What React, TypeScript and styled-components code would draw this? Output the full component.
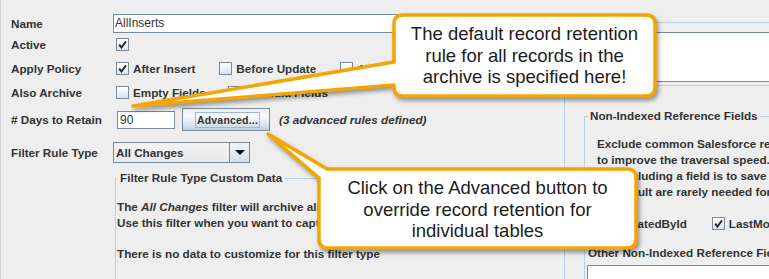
import React from "react";
import styled, { createGlobalStyle } from "styled-components";

const C = {
  bg: "#eeeeee",
  text: "#333333",
  field: "#7a8a99",
  titled: "#b8cfe5",
  orange: "#f5a500",
};

const GlobalStyle = createGlobalStyle`
  html, body { margin: 0; padding: 0; background: ${C.bg}; }
  #root { width: 769px; height: 279px; }
`;

const Page = styled.div`
  position: relative;
  display: flex;
  width: 769px;
  height: 279px;
  box-sizing: border-box;
  overflow: hidden;
  background: ${C.bg};
  border-left: 1px solid #d4d4d4;
  color: ${C.text};
  font-family: "Liberation Sans", Arial, sans-serif;
  font-size: 11.7px;
  font-weight: bold;
`;

const LeftColumn = styled.div`
  flex: none;
  width: 563px;
  box-sizing: border-box;
  padding: 14px 0 0 10px;
  display: flex;
  flex-direction: column;
`;

const Row = styled.div<{ $h: number }>`
  display: flex;
  align-items: center;
  flex: none;
  height: ${(p) => p.$h}px;
  white-space: nowrap;
`;

const Label = styled.div`
  flex: none;
  width: 102px;
`;

const TextField = styled.div<{ $w: number; $h: number; $ml?: number; $pl?: number }>`
  flex: none;
  box-sizing: border-box;
  width: ${(p) => p.$w}px;
  height: ${(p) => p.$h}px;
  margin-left: ${(p) => p.$ml ?? 0}px;
  padding-left: ${(p) => p.$pl ?? 1}px;
  background: #ffffff;
  border: 1px solid ${C.field};
  font-size: 12px;
  font-weight: normal;
  line-height: ${(p) => p.$h - 2}px;
  overflow: hidden;
`;

const CheckGroup = styled.div<{ $gap: number; $ml: number }>`
  display: flex;
  align-items: center;
  gap: ${(p) => p.$gap}px;
  margin-left: ${(p) => p.$ml}px;
`;

const CheckItem = styled.div`
  display: flex;
  align-items: center;
  gap: 4px;
`;

const Box = styled.span`
  flex: none;
  box-sizing: border-box;
  width: 13px;
  height: 13px;
  border: 1px solid ${C.field};
  background: linear-gradient(#ffffff, #d9e4ef);
  display: flex;
  align-items: center;
  justify-content: center;
`;

const Check = ({ checked, label }: { checked?: boolean; label?: string }) => (
  <CheckItem>
    <Box>
      {checked && (
        <svg width="9" height="9" viewBox="0 0 9 9">
          <path d="M1.2 4.6 L3.4 7.6 L8 1.4" fill="none" stroke="#2a2a2a" strokeWidth="1.9" />
        </svg>
      )}
    </Box>
    {label && <span>{label}</span>}
  </CheckItem>
);

const Button = styled.div`
  flex: none;
  box-sizing: border-box;
  width: 88px;
  height: 23px;
  margin-left: 7px;
  padding-left: 3px;
  border: 1px solid ${C.field};
  background: linear-gradient(#e9f0f6 0%, #f8fafc 35%, #d7e3ee 75%, #bfd1e3 100%);
  display: flex;
  align-items: center;
  justify-content: center;
`;

const FocusRing = styled.span`
  border: 1px solid #a3b8cc;
  padding: 0 1px;
  font-size: 10.5px;
  line-height: 14px;
  letter-spacing: 0.2px;
`;

const Hint = styled.span`
  margin-left: 9px;
  font-style: italic;
`;

const Combo = styled.div`
  flex: none;
  box-sizing: border-box;
  width: 137px;
  height: 21px;
  display: flex;
  border: 1px solid ${C.field};
  background: linear-gradient(#f3f3f3, #e9e9e9);
`;

const ComboValue = styled.div`
  flex: 1;
  padding-left: 2px;
  line-height: 19px;
`;

const ComboArrow = styled.div`
  flex: none;
  width: 19px;
  border-left: 1px solid ${C.field};
  background: linear-gradient(#f4f7fa, #d3dfea);
  display: flex;
  align-items: center;
  justify-content: center;
`;

const TitledSet = styled.fieldset<{ $w: number; $h: number; $pt: number; $pl: number }>`
  flex: none;
  box-sizing: border-box;
  min-width: 0;
  width: ${(p) => p.$w}px;
  height: ${(p) => p.$h}px;
  margin: 0;
  padding: ${(p) => p.$pt}px 0 0 ${(p) => p.$pl}px;
  border: 1px solid ${C.titled};
  border-right: none;
`;

const Legend = styled.legend<{ $px: number }>`
  padding: 0 ${(p) => p.$px}px;
  line-height: 14px;
  white-space: nowrap;
`;

const CustomData = styled(TitledSet)`
  margin: 1px 0 0 104px;
`;

const Para = styled.p<{ $mt?: number; $ml?: number }>`
  margin: ${(p) => p.$mt ?? 0}px 0 0 ${(p) => p.$ml ?? 0}px;
  line-height: 16px;
  white-space: nowrap;
`;

const RightColumn = styled.div`
  flex: 1;
  min-width: 0;
  padding-top: 22px;
  display: flex;
  flex-direction: column;
`;

const DescBox = styled.div`
  flex: none;
  box-sizing: border-box;
  height: 64px;
  padding: 9px 0 0 9px;
  border: 1px solid ${C.titled};
  border-right: none;
`;

const TextArea = styled.div<{ $h: number }>`
  box-sizing: border-box;
  width: 320px;
  height: ${(p) => p.$h}px;
  background: #ffffff;
  border: 1px solid ${C.field};
`;

const OuterPanel = styled.div`
  flex: 1;
  margin-top: 10px;
  padding: 13px 0 0 19px;
  border-left: 1px solid ${C.titled};
`;

const NonIndexed = styled(TitledSet)``;

const OtherSet = styled.fieldset`
  min-width: 0;
  margin: 11px 0 0 -1px;
  padding: 5px 0 0 0;
  border: none;
  border-top: 1px solid ${C.titled};
`;

const CheckRow = styled.div`
  height: 24px;
  margin: 11px 0 0 13px;
  display: flex;
  align-items: center;
  white-space: nowrap;
`;

const Overlay = styled.svg`
  position: absolute;
  left: -1px;
  top: 0;
  width: 769px;
  height: 279px;
  overflow: visible;
  pointer-events: none;
  filter: drop-shadow(2px 3px 2px rgba(0, 0, 0, 0.38));
`;

const CalloutText = styled.div<{ $x: number; $y: number; $w: number }>`
  position: absolute;
  left: ${(p) => p.$x - 1}px;
  top: ${(p) => p.$y}px;
  width: ${(p) => p.$w}px;
  text-align: center;
  font-family: "Liberation Sans", Arial, sans-serif;
  font-weight: normal;
  font-size: 18.5px;
  line-height: 21.5px;
  color: #1c1c1c;
  white-space: nowrap;
`;

const callout1 =
  "M403 15 H646 Q655 15 655 24 V87 Q655 96 646 96 H403 Q394 96 394 87 V85 L133 106 L394 62 V24 Q394 15 403 15 Z";
const callout2 =
  "M327 169 H627 Q636 169 636 178 V239 Q636 248 627 248 H328 Q319 248 319 239 V178 L268 134 Z";

export default function App() {
  return (
    <Page>
      <GlobalStyle />
      <LeftColumn>
        <Row $h={19}>
          <Label>Name</Label>
          <TextField $w={443} $h={19} $pl={1}>AllInserts</TextField>
        </Row>
        <Row $h={23}>
          <Label>Active</Label>
          <CheckGroup $gap={23} $ml={3}>
            <Check checked />
          </CheckGroup>
        </Row>
        <Row $h={24}>
          <Label>Apply Policy</Label>
          <CheckGroup $gap={24} $ml={3}>
            <Check checked label="After Insert" />
            <Check label="Before Update" />
            <Check label="After Update" />
          </CheckGroup>
        </Row>
        <Row $h={24}>
          <Label>Also Archive</Label>
          <CheckGroup $gap={22} $ml={3}>
            <Check label="Empty Fields" />
            <Check label="Formula Fields" />
          </CheckGroup>
        </Row>
        <Row $h={31}>
          <Label># Days to Retain</Label>
          <TextField $w={58} $h={18} $ml={4} $pl={2}>90</TextField>
          <Button>
            <FocusRing>Advanced...</FocusRing>
          </Button>
          <Hint>(3 advanced rules defined)</Hint>
        </Row>
        <Row $h={35}>
          <Label>Filter Rule Type</Label>
          <Combo>
            <ComboValue>All Changes</ComboValue>
            <ComboArrow>
              <svg width="10" height="5" viewBox="0 0 10 5">
                <polygon points="0,0 10,0 5,5" fill="#111" />
              </svg>
            </ComboArrow>
          </Combo>
        </Row>
        <CustomData $w={442} $h={160} $pt={14} $pl={1}>
          <Legend $px={3}>Filter Rule Type Custom Data</Legend>
          <Para>
            The <i>All Changes</i> filter will archive all changes made to the records.
          </Para>
          <Para>Use this filter when you want to capture every change.</Para>
          <Para $mt={15}>There is no data to customize for this filter type</Para>
        </CustomData>
      </LeftColumn>

      <RightColumn>
        <DescBox>
          <TextArea $h={50} />
        </DescBox>
        <OuterPanel>
          <NonIndexed $w={300} $h={220} $pt={13} $pl={3}>
            <Legend $px={2}>Non-Indexed Reference Fields</Legend>
            <Para $ml={9}>Exclude common Salesforce reference fields</Para>
            <Para $ml={9}>to improve the traversal speed. The cost of</Para>
            <Para $ml={9}>not excluding a field is to save data that</Para>
            <Para $ml={9}>by default are rarely needed for restoring.</Para>
            <CheckRow>
              <CheckGroup $gap={25} $ml={0}>
                <Check checked label="CreatedById" />
                <Check checked label="LastModifiedById" />
              </CheckGroup>
            </CheckRow>
            <OtherSet>
              <Legend $px={1}>Other Non-Indexed Reference Fields</Legend>
              <TextArea $h={40} />
            </OtherSet>
          </NonIndexed>
        </OuterPanel>
      </RightColumn>

      <Overlay viewBox="0 0 769 279">
        <path d={callout1} fill="#ffffff" stroke={C.orange} strokeWidth="3.5" strokeLinejoin="round" />
        <path d={callout2} fill="#ffffff" stroke={C.orange} strokeWidth="3.5" strokeLinejoin="round" />
      </Overlay>
      <CalloutText $x={394} $y={23} $w={261}>
        The default record retention
        <br />
        rule for all records in the
        <br />
        archive is specified here!
      </CalloutText>
      <CalloutText $x={319} $y={177} $w={317}>
        Click on the Advanced button to
        <br />
        override record retention for
        <br />
        individual tables
      </CalloutText>
    </Page>
  );
}
